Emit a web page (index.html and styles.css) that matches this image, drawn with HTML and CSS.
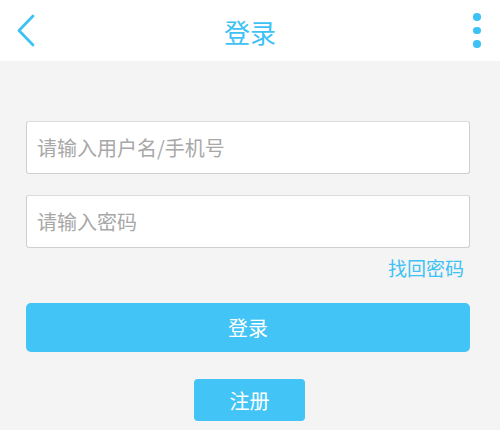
FILE: index.html
```html
<!DOCTYPE html>
<html lang="zh-CN">
<head>
<meta charset="utf-8">
<title>登录</title>
<link rel="stylesheet" href="styles.css">
</head>
<body>
<header class="topbar">
  <button class="icon-btn back" aria-label="返回">
    <svg width="24" height="36" viewBox="0 0 24 36"><polyline points="17,3 3,17.5 17,32" fill="none" stroke="#3ec2f5" stroke-width="2.8" stroke-linecap="round" stroke-linejoin="round"/></svg>
  </button>
  <h1 class="title">登录</h1>
  <button class="icon-btn more" aria-label="更多">
    <span class="dot"></span><span class="dot"></span><span class="dot"></span>
  </button>
</header>
<main class="content">
  <form class="form">
    <input class="field" type="text" placeholder="请输入用户名/手机号">
    <input class="field pw" type="password" placeholder="请输入密码">
    <div class="forgot-row"><a class="forgot" href="#">找回密码</a></div>
    <button class="btn-login" type="button">登录</button>
    <div class="reg-row"><button class="btn-reg" type="button">注册</button></div>
  </form>
</main>
</body>
</html>
```
FILE: styles.css
```css
* { box-sizing: border-box; }
html, body { margin: 0; padding: 0; }
body {
  width: 500px;
  height: 430px;
  overflow: hidden;
  background: #f4f4f4;
  font-family: "Noto Sans CJK SC", "Noto Sans", sans-serif;
}
.topbar {
  height: 61px;
  background: #fff;
  display: flex;
  align-items: center;
  justify-content: space-between;
  padding: 0 17px 0 16px;
}
.icon-btn {
  border: 0;
  background: none;
  padding: 0;
  display: flex;
  width: 24px;
  height: 40px;
  align-items: center;
  justify-content: center;
}
.back { margin-top: 1px; }
.more {
  flex-direction: column;
  gap: 6px;
  width: 24px;
  align-items: flex-end;
  padding-right: 2px;
}
.dot {
  width: 7.5px;
  height: 7.5px;
  border-radius: 50%;
  background: #3ec2f5;
}
.title {
  margin: 0;
  font-size: 26px;
  font-weight: 400;
  color: #3ec2f5;
  line-height: 1;
  margin-top: 2px;
  margin-left: 1px;
}
.content {
  padding: 60px 30px 0 26px;
}
.form {
  display: flex;
  flex-direction: column;
}
.field {
  height: 53px;
  width: 100%;
  border: 1px solid #cfcfcf;
  border-top-color: #dcdcdc;
  border-radius: 3px;
  background: #fff;
  padding: 0 10px;
  font-family: inherit;
  font-size: 20px;
  color: #333;
  outline: none;
}
.field::placeholder { color: #a8a8a8; }
.pw { margin-top: 21px; }
.forgot-row {
  display: flex;
  justify-content: flex-end;
  padding-right: 6px;
  height: 55px;
  padding-top: 7px;
}
.forgot {
  color: #3ec2f5;
  font-size: 19px;
  line-height: 25px;
  text-decoration: none;
}
.btn-login {
  height: 49px;
  border: 0;
  border-radius: 5px;
  background: #42c4f6;
  color: #fff;
  font-family: inherit;
  font-size: 20px;
}
.reg-row {
  display: flex;
  justify-content: center;
  padding-top: 27px;
  padding-left: 3px;
}
.btn-reg {
  width: 111px;
  height: 42px;
  border: 0;
  border-radius: 4px;
  background: #42c4f6;
  color: #fff;
  font-family: inherit;
  font-size: 20px;
}
```
